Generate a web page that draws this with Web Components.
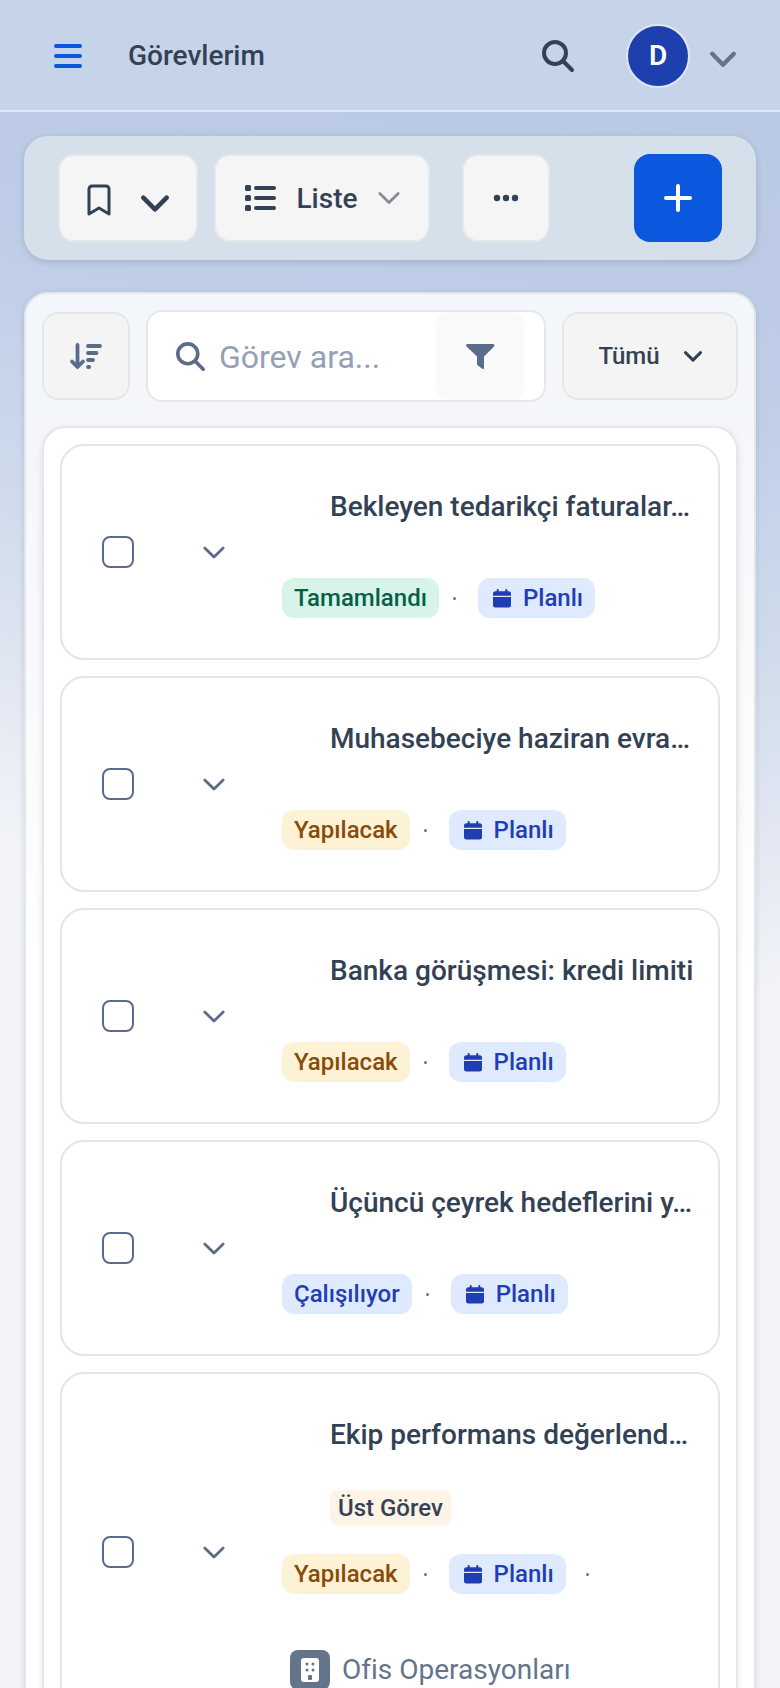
<!DOCTYPE html>
<html lang="tr">
<head>
<meta charset="utf-8">
<meta name="viewport" content="width=device-width, initial-scale=1">
<title>Görevlerim</title>
<style>
    body {
        margin: 0;
        font-family: Roboto, "Liberation Sans", sans-serif;
        color: #334155;
    }
</style>
</head>
<body>
<task-app>
    <app-header slot="header" name="Görevlerim" initial="D"></app-header>
    <task-toolbar></task-toolbar>
    <task-panel>
        <task-card name="Bekleyen tedarikçi faturalar…">
            <task-tag kind="done">Tamamlandı</task-tag>
            <task-tag kind="plan">Planlı</task-tag>
        </task-card>
        <task-card name="Muhasebeciye haziran evra…">
            <task-tag kind="todo">Yapılacak</task-tag>
            <task-tag kind="plan">Planlı</task-tag>
        </task-card>
        <task-card name="Banka görüşmesi: kredi limiti">
            <task-tag kind="todo">Yapılacak</task-tag>
            <task-tag kind="plan">Planlı</task-tag>
        </task-card>
        <task-card name="Üçüncü çeyrek hedeflerini y…">
            <task-tag kind="working">Çalışılıyor</task-tag>
            <task-tag kind="plan">Planlı</task-tag>
        </task-card>
        <task-card name="Ekip performans değerlend…" parent="Üst Görev" team="Ofis Operasyonları">
            <task-tag kind="todo">Yapılacak</task-tag>
            <task-tag kind="plan" more>Planlı</task-tag>
        </task-card>
    </task-panel>
</task-app>

<script>
const ICONS = {
    menu: '<path d="M2 4h24M2 14h24M2 24h24" stroke-width="4"/>',
    search: '<circle cx="13" cy="13" r="11" stroke-width="4"/><path d="M21 21l9 9" stroke-width="4"/>',
    chevron: '<path d="M2 2l10 10L22 2"/>',
    bookmark: '<path d="M2 30V5a3 3 0 0 1 3-3h14a3 3 0 0 1 3 3v25l-10-6z" stroke-width="3"/>',
    list: '<g fill="currentColor" stroke="none"><rect width="6" height="6" rx="1.5"/><rect y="10" width="6" height="6" rx="1.5"/><rect y="20" width="6" height="6" rx="1.5"/></g><path d="M11 3h18M11 13h18M11 23h18" stroke-width="4"/>',
    dots: '<g fill="currentColor" stroke="none"><circle cx="4" cy="4" r="3.2"/><circle cx="13" cy="4" r="3.2"/><circle cx="22" cy="4" r="3.2"/></g>',
    plus: '<path d="M14 2v24M2 14h24" stroke-width="4"/>',
    sort: '<path d="M7.500 2v22M2 18.500l5.500 5.500 5.500-5.500M18 3h12M18 10h8.500M18 17h5M18 24h1.200" stroke-width="3.800"/>',
    filter: '<path d="M1.500 0h25.500c1.400 0 1.900 1.500 1 2.500L18 12.500V24c0 1-1 1.400-1.800.8L11.800 21.500a2 2 0 0 1-.8-1.500v-7.500L.5 2.500C-.4 1.500.1 0 1.500 0z" fill="currentColor" stroke="none"/>',
    calendar: '<path d="M4.700 1v3M13.300 1v3" stroke-width="2"/><path d="M2.500 2.200h13A2.500 2.500 0 0 1 18 4.700v2H0v-2a2.500 2.500 0 0 1 2.500-2.500zM0 8h18v8a2.500 2.500 0 0 1-2.500 2.500h-13A2.500 2.500 0 0 1 0 16z" fill="currentColor" stroke="none"/>',
    building: '<rect width="18" height="24" rx="3" fill="#fff" stroke="none"/><g fill="currentColor" stroke="none"><circle cx="6" cy="6" r="1.500"/><circle cx="12" cy="6" r="1.500"/><circle cx="6" cy="12" r="1.500"/><circle cx="12" cy="12" r="1.500"/><rect x="7" y="17" width="4" height="5" rx="1"/></g>'
};

const icon = (name, w, h, box = `0 0 ${w} ${h}`, stroke = 3) => `<svg aria-hidden="true" width="${w}" height="${h}" viewBox="${box}" fill="none" stroke="currentColor" stroke-width="${stroke}" stroke-linecap="round" stroke-linejoin="round">${ICONS[name]}</svg>`;

const base = `
    * {
        box-sizing: border-box;
    }
    button, input {
        font: inherit;
        color: inherit;
        margin: 0;
    }
    button {
        display: flex;
        align-items: center;
        justify-content: center;
        padding: 0;
        border: none;
        background: none;
        cursor: pointer;
    }
    svg {
        display: block;
        flex: none;
        overflow: visible;
    }
`;

class TaskApp extends HTMLElement {
    constructor() {
        super();
        this.attachShadow({ mode: "open" });
    }

    connectedCallback() {
        this.shadowRoot.innerHTML = `
        <style>
            ${base}
            :host {
                display: flex;
                flex-direction: column;
                height: 100vh;
                background: linear-gradient(191deg, #b9c9e3 100px, #bccae5 260px, #c1cee8 420px, #d0dcec 650px, #dee4f0 780px, #f2f4f8 980px);
            }
            main {
                flex: 1;
                min-height: 0;
                overflow: auto;
                scrollbar-width: none;
                padding: 24px;
            }
        </style>
        <slot name="header"></slot>
        <main><slot></slot></main>
        `;
    }
}

class AppHeader extends HTMLElement {
    constructor() {
        super();
        this.attachShadow({ mode: "open" });
    }

    connectedCallback() {
        this.shadowRoot.innerHTML = `
        <style>
            ${base}
            :host {
                display: block;
                flex: none;
            }
            header {
                display: flex;
                align-items: center;
                height: 112px;
                padding: 0 44px 0 54px;
                background: #c6d4e9;
                box-shadow: inset 0 -2px #e3e8ee;
            }
            .menu {
                color: #0b57dd;
            }
            h1 {
                flex: 1;
                margin: 0 0 0 46px;
                font-size: 28px;
                line-height: 40px;
                font-weight: 500;
            }
            .user {
                gap: 20px;
                margin-left: 52px;
                color: #64748b;
            }
            .avatar {
                width: 64px;
                height: 64px;
                border: 2px solid #dfe5f2;
                border-radius: 50%;
                background: #1e40af;
                color: #fff;
                font-size: 28px;
                line-height: 60px;
                font-weight: 600;
            }
        </style>
        <header>
            <button class="menu" aria-label="Menü">${icon('menu', 28, 28)}</button>
            <h1>${this.getAttribute('name')}</h1>
            <button aria-label="Ara">${icon('search', 32, 32)}</button>
            <button class="user" aria-label="Hesap">
                <span class="avatar">${this.getAttribute('initial')}</span>
                ${icon('chevron', 26, 22, '0 -6 24 20', 4)}
            </button>
        </header>
        `;
    }
}

class TaskToolbar extends HTMLElement {
    constructor() {
        super();
        this.attachShadow({ mode: "open" });
    }

    connectedCallback() {
        this.shadowRoot.innerHTML = `
        <style>
            ${base}
            :host {
                display: flex;
                padding: 18px 34px;
                border-radius: 24px;
                background: #d6e0ea;
                box-shadow: 0 2px 6px rgba(51, 65, 85, 0.2);
            }
            button {
                height: 88px;
                border: 2px solid #e6e9eb;
                border-radius: 16px;
                background: #f5f5f5;
                font-size: 28px;
                font-weight: 500;
            }
            .saved {
                width: 140px;
                gap: 30px;
                margin-right: 16px;
                padding-top: 4px;
            }
            .view {
                width: 216px;
                gap: 20px;
                margin-right: 32px;
            }
            .view svg:last-child {
                color: #868b94;
            }
            .square {
                width: 88px;
            }
            .add {
                margin-left: auto;
                border: none;
                background: #0b57dd;
                color: #fff;
            }
        </style>
        <button class="saved" aria-label="Kayıtlı görünümler">${icon('bookmark', 24, 32)}${icon('chevron', 28, 24, '0 -6 24 20', 4)}</button>
        <button class="view">${icon('list', 32, 26)}<span>Liste</span>${icon('chevron', 22, 14, '0 0 24 14')}</button>
        <button class="square" aria-label="Diğer">${icon('dots', 26, 8)}</button>
        <button class="square add" aria-label="Görev ekle">${icon('plus', 28, 28)}</button>
        `;
    }
}

class TaskPanel extends HTMLElement {
    constructor() {
        super();
        this.attachShadow({ mode: "open" });
    }

    connectedCallback() {
        this.shadowRoot.innerHTML = `
        <style>
            ${base}
            :host {
                display: block;
                margin-top: 32px;
                padding: 16px;
                border: 2px solid #e2e5ea;
                border-radius: 24px;
                background: linear-gradient(#f3f6fa 0, #f5f7fa 200px, #fff 700px);
                box-shadow: 0 2px 6px rgba(51, 65, 85, 0.14);
            }
            .filters {
                display: flex;
                align-items: center;
                gap: 16px;
                margin-bottom: 24px;
            }
            .filters > button {
                height: 88px;
                border: 2px solid #e5e7e8;
                border-radius: 16px;
                background: #f4f4f4;
            }
            .sort {
                width: 88px;
                color: #5b6b8a;
            }
            .all {
                width: 176px;
                gap: 24px;
                font-size: 24px;
                font-weight: 500;
            }
            .search {
                display: flex;
                flex: 1;
                min-width: 0;
                align-items: center;
                height: 92px;
                padding: 0 20px 0 28px;
                border: 2px solid #e5e7e8;
                border-radius: 16px;
                background: #fff;
                color: #5b6b8a;
            }
            input {
                flex: 1;
                min-width: 0;
                height: 88px;
                padding: 2px 0 0 14px;
                border: none;
                outline: none;
                background: none;
                color: #334155;
                font-size: 32px;
            }
            input::placeholder {
                color: #94a0b4;
            }
            .filter {
                width: 88px;
                height: 88px;
                border-radius: 12px;
                background: #fafafa;
            }
            .list {
                display: flex;
                flex-direction: column;
                gap: 16px;
                padding: 16px;
                border: 2px solid #e5e7e8;
                border-radius: 24px;
                background: #fff;
                box-shadow: 0 2px 6px rgba(51, 65, 85, 0.12);
            }
        </style>
        <div class="filters">
            <button class="sort" aria-label="Sırala">${icon('sort', 32, 26)}</button>
            <div class="search">
                ${icon('search', 29, 29, '0 0 32 32')}
                <input type="text" placeholder="Görev ara..." aria-label="Görev ara">
                <button class="filter" aria-label="Filtrele">${icon('filter', 28, 25)}</button>
            </div>
            <button class="all"><span>Tümü</span>${icon('chevron', 18, 12, '0 -1 24 15', 4)}</button>
        </div>
        <div class="list"><slot></slot></div>
        `;
    }
}

class TaskCard extends HTMLElement {
    constructor() {
        super();
        this.attachShadow({ mode: "open" });
    }

    connectedCallback() {
        const name = this.getAttribute('name');
        const parent = this.getAttribute('parent');
        const team = this.getAttribute('team');

        this.shadowRoot.innerHTML = `
        <style>
            ${base}
            :host {
                display: flex;
                align-items: center;
                padding: 40px 16px 40px 40px;
                border: 2px solid #e5e5e5;
                border-radius: 24px;
                background: #fff;
            }
            input {
                appearance: none;
                flex: none;
                width: 32px;
                height: 32px;
                border: 2px solid #5b6b8a;
                border-radius: 8px;
                background: #fff;
            }
            input:checked {
                background: #5b6b8a;
            }
            .expand {
                flex: none;
                width: 88px;
                height: 88px;
                margin: 0 24px 0 36px;
                color: #5b6b8a;
            }
            .body {
                flex: 1;
                min-width: 0;
            }
            h2 {
                margin: 0 0 0 48px;
                overflow: hidden;
                white-space: nowrap;
                text-overflow: ellipsis;
                font-size: 28px;
                line-height: 42px;
                font-weight: 500;
            }
            .parent {
                width: fit-content;
                margin: 34px 0 0 48px;
                padding: 0 8px;
                border-radius: 8px;
                background: #fdf3e6;
                font-size: 24px;
                line-height: 36px;
                font-weight: 500;
            }
            .tags {
                display: flex;
                margin-top: 50px;
            }
            .parent + .tags {
                margin-top: 28px;
            }
            .team {
                display: flex;
                align-items: center;
                gap: 12px;
                margin: 56px 0 0 8px;
                color: #64748b;
                font-size: 28px;
                line-height: 40px;
            }
            .badge {
                display: flex;
                align-items: center;
                justify-content: center;
                width: 40px;
                height: 40px;
                border-radius: 8px;
                background: #64748b;
                color: #fff;
            }
            .badge g {
                color: #64748b;
            }
        </style>
        <input type="checkbox" aria-label="${name}">
        <button class="expand" aria-label="Genişlet">${icon('chevron', 22, 13, '0 0 24 14')}</button>
        <div class="body">
            <h2>${name}</h2>
            ${parent ? `<div class="parent">${parent}</div>` : ''}
            <div class="tags"><slot></slot></div>
            ${team ? `<div class="team"><span class="badge">${icon('building', 18, 24)}</span><span>${team}</span></div>` : ''}
        </div>
        `;
    }
}

class TaskTag extends HTMLElement {
    constructor() {
        super();
        this.attachShadow({ mode: "open" });
    }

    connectedCallback() {
        const plan = this.getAttribute('kind') === 'plan';
        const dot = !plan || this.hasAttribute('more');

        this.shadowRoot.innerHTML = `
        <style>
            ${base}
            :host {
                display: flex;
                align-items: center;
                font-size: 24px;
                line-height: 40px;
                font-weight: 500;
                --bg: #dfeafe;
                --fg: #1e3eb4;
            }
            :host([kind="done"]) {
                --bg: #d8f3e8;
                --fg: #065f46;
            }
            :host([kind="todo"]) {
                --bg: #fef2d6;
                --fg: #8a4b08;
            }
            .tag {
                display: flex;
                align-items: center;
                gap: 12px;
                padding: 0 12px;
                border-radius: 12px;
                background: var(--bg);
                color: var(--fg);
            }
            :host([kind="plan"]) .tag {
                padding-left: 15px;
            }
            .dot {
                width: 3px;
                height: 3px;
                margin: 0 22px 0 14px;
                border-radius: 50%;
                background: #64748b;
            }
            :host([kind="plan"]) .dot {
                margin-left: 20px;
            }
        </style>
        <span class="tag">${plan ? icon('calendar', 18, 19) : ''}<slot></slot></span>
        ${dot ? '<span class="dot"></span>' : ''}
        `;
    }
}

customElements.define('task-app', TaskApp);
customElements.define('app-header', AppHeader);
customElements.define('task-toolbar', TaskToolbar);
customElements.define('task-panel', TaskPanel);
customElements.define('task-card', TaskCard);
customElements.define('task-tag', TaskTag);
</script>
</body>
</html>
